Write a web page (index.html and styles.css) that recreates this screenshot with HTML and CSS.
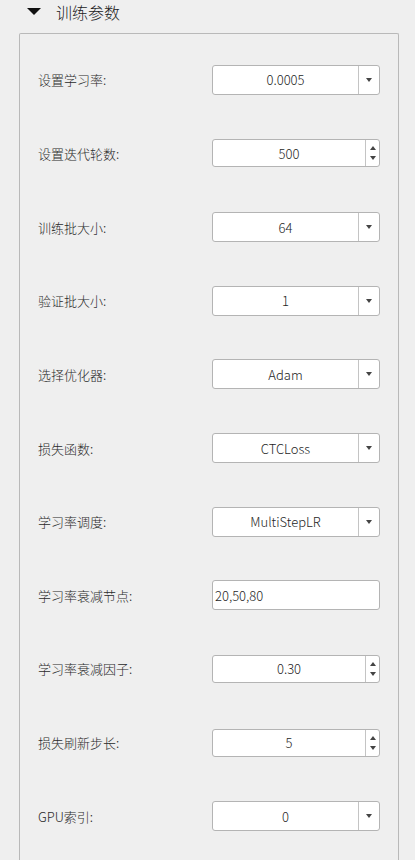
FILE: index.html
```html
<!DOCTYPE html>
<html lang="zh">
<head>
<meta charset="utf-8">
<link rel="stylesheet" href="styles.css">
</head>
<body>
<div class="header">
  <svg class="caret" width="14" height="7" viewBox="0 0 14 7"><polygon points="0,0 14,0 7,7" fill="#111"/></svg>
  <span class="title">训练参数</span>
</div>
<div class="group">
  <div class="row"><span class="label">设置学习率:</span>
    <div class="field combo"><span class="value">0.0005</span><span class="btn"><i class="down"></i></span></div></div>
  <div class="row"><span class="label">设置迭代轮数:</span>
    <div class="field spin"><span class="value">500</span><span class="sbtn"><i class="up"></i><i class="down"></i></span></div></div>
  <div class="row"><span class="label">训练批大小:</span>
    <div class="field combo"><span class="value">64</span><span class="btn"><i class="down"></i></span></div></div>
  <div class="row"><span class="label">验证批大小:</span>
    <div class="field combo"><span class="value">1</span><span class="btn"><i class="down"></i></span></div></div>
  <div class="row"><span class="label">选择优化器:</span>
    <div class="field combo"><span class="value">Adam</span><span class="btn"><i class="down"></i></span></div></div>
  <div class="row"><span class="label">损失函数:</span>
    <div class="field combo"><span class="value">CTCLoss</span><span class="btn"><i class="down"></i></span></div></div>
  <div class="row"><span class="label">学习率调度:</span>
    <div class="field combo"><span class="value">MultiStepLR</span><span class="btn"><i class="down"></i></span></div></div>
  <div class="row"><span class="label">学习率衰减节点:</span>
    <div class="field edit"><span class="value">20,50,80</span></div></div>
  <div class="row"><span class="label">学习率衰减因子:</span>
    <div class="field spin"><span class="value">0.30</span><span class="sbtn"><i class="up"></i><i class="down"></i></span></div></div>
  <div class="row"><span class="label">损失刷新步长:</span>
    <div class="field spin"><span class="value">5</span><span class="sbtn"><i class="up"></i><i class="down"></i></span></div></div>
  <div class="row"><span class="label">GPU索引:</span>
    <div class="field combo"><span class="value">0</span><span class="btn"><i class="down"></i></span></div></div>
</div>
</body>
</html>
```
FILE: styles.css
```css
html, body {
  margin: 0;
  padding: 0;
  background: #efefef;
  font-family: "Noto Sans CJK SC", sans-serif;
  font-weight: 300;
  color: #1e1e1e;
  height: 860px;
  overflow: hidden;
}
.header {
  height: 24px;
  display: flex;
  align-items: center;
  padding-left: 27px;
}
.caret { display: block; margin-top: -1px; }
.title {
  margin-left: 15px;
  font-size: 16px;
  line-height: 20px;
  color: #222;
}
.group {
  margin-top: 9px;
  margin-left: 19px;
  width: 378px;
  height: 818px;
  border: 1px solid #b9b9b9;
  border-bottom: none;
  border-radius: 2px 2px 0 0;
  padding-top: 9px;
  box-sizing: content-box;
  overflow: hidden;
}
.row {
  height: 73.65px;
  display: flex;
  align-items: center;
  padding-left: 18px;
}
.label {
  width: 174px;
  font-size: 13px;
  color: #2a2a2a;
}
.field {
  width: 168px;
  box-sizing: border-box;
  background: #fff;
  border: 1px solid #b4b4b4;
  border-radius: 3px;
  display: flex;
  align-items: stretch;
  font-size: 13px;
}
.combo { height: 30px; }
.spin { height: 28px; }
.edit { height: 30px; }
.value {
  flex: 1;
  display: flex;
  align-items: center;
  justify-content: center;
}
.edit .value { justify-content: flex-start; padding-left: 2px; }
.btn {
  width: 20px;
  border-left: 1px solid #c4c4c4;
  display: flex;
  align-items: center;
  justify-content: center;
}
.sbtn {
  width: 13px;
  border-left: 1px solid #c4c4c4;
  display: flex;
  flex-direction: column;
  align-items: center;
  justify-content: center;
  gap: 6px;
}
.down, .up {
  display: block;
  width: 0;
  height: 0;
  border-left: 3.5px solid transparent;
  border-right: 3.5px solid transparent;
}
.down { border-top: 4px solid #444; }
.up { border-bottom: 4px solid #444; }
```
